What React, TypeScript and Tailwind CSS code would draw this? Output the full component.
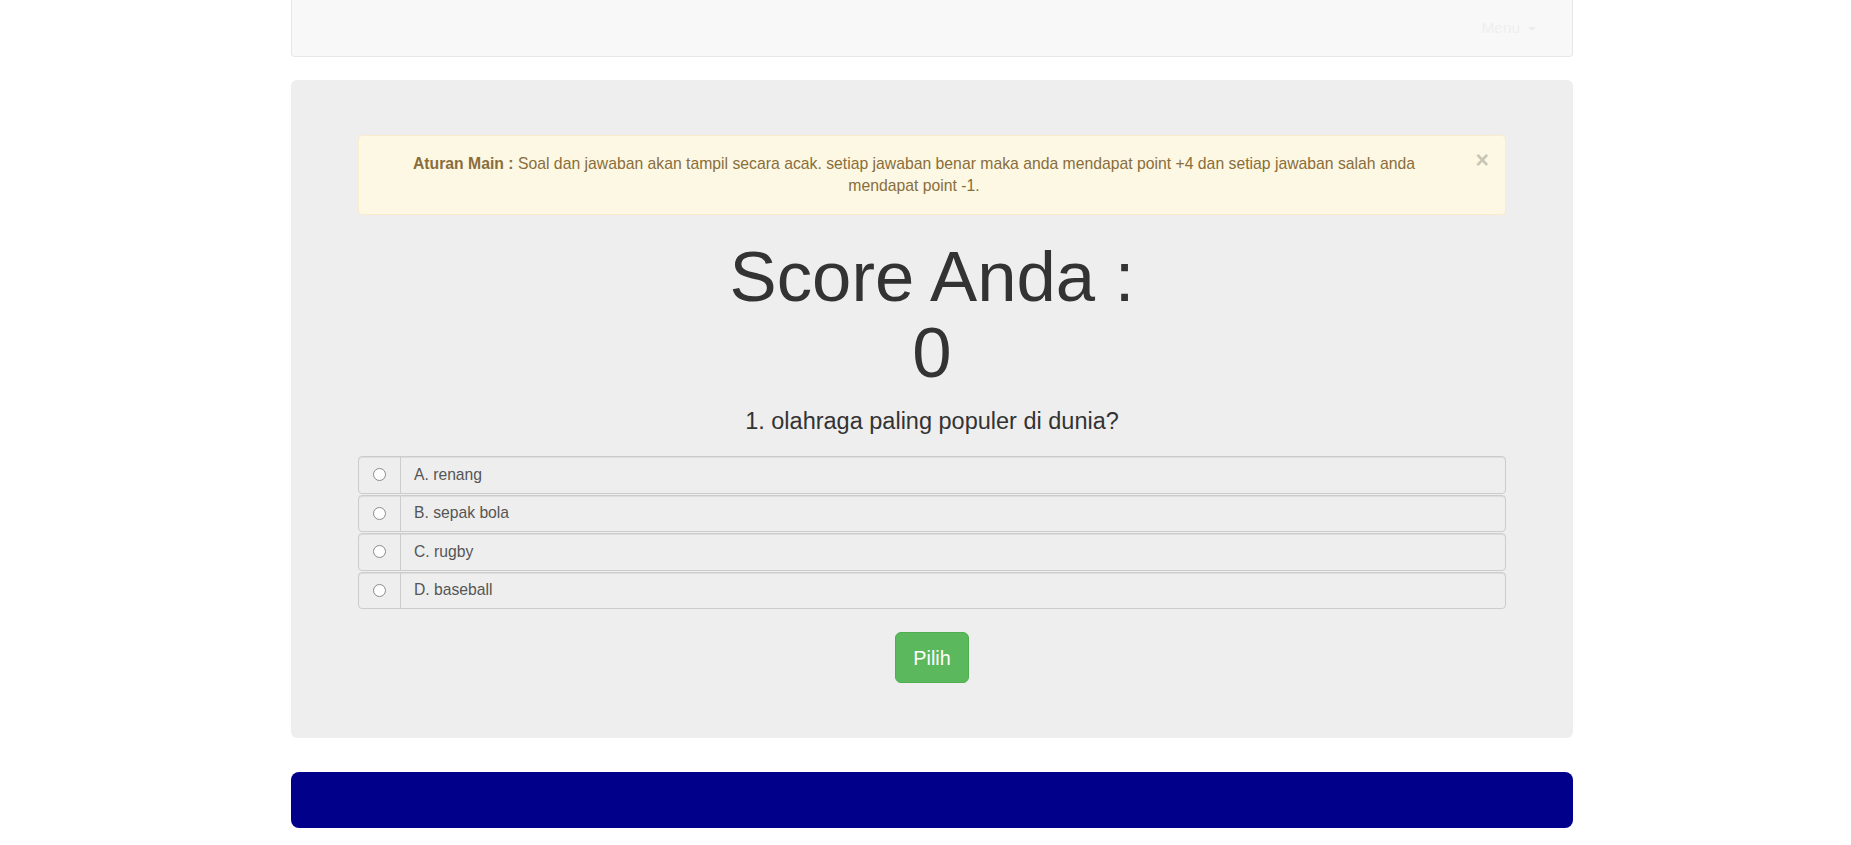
import React from "react";

const options = ["A. renang", "B. sepak bola", "C. rugby", "D. baseball"];

export default function App() {
  return (
    <div className="min-h-screen bg-white font-['Liberation_Sans',Arial,sans-serif] text-[#333]">
      <div className="ml-[291px] w-[1282px]">
        {/* navbar */}
        <div className="h-[57px] bg-[#f8f8f8] border border-t-0 border-[#e7e7e7] rounded-b-[4px] flex items-center justify-end pr-[36px]">
          <span className="text-[15.4px] leading-[22px] text-[#efefef]">Menu</span>
          <span className="ml-[8px] mt-[2px] w-0 h-0 border-l-[4px] border-r-[4px] border-t-[4px] border-l-transparent border-r-transparent border-t-[#ececec]" />
        </div>

        {/* jumbotron */}
        <div className="mt-[23px] bg-[#eeeeee] rounded-[6px] px-[67px] pt-[55px] pb-[55px] flex flex-col">
          {/* alert */}
          <div className="relative h-[80px] bg-[#fcf8e3] border border-[#faebcc] rounded-[4px] pl-[17px] pr-[53px] pt-[17px] text-center text-[#8a6d3b] text-[15.75px] leading-[22px]">
            <span className="font-bold">Aturan Main :</span> Soal dan jawaban akan tampil secara acak. setiap jawaban benar maka anda mendapat point +4 dan setiap jawaban salah anda
            <br />
            mendapat point -1.
            <span className="absolute right-[16px] top-[13px] text-[23px] leading-none font-bold text-black opacity-20">×</span>
          </div>

          {/* score */}
          <h1 className="mt-[24px] text-center text-[70.7px] leading-[76px] font-normal text-[#333]">
            Score Anda :
            <br />0
          </h1>

          {/* question */}
          <p className="mt-[14px] text-center text-[23.5px] leading-[33px] text-[#333]">1. olahraga paling populer di dunia?</p>

          {/* options */}
          <div className="mt-[18px] flex flex-col gap-[1px]">
            {options.map((o) => (
              <div key={o} className="h-[37.5px] flex border border-[#cccccc] rounded-[4px] bg-[#eeeeee] shadow-[inset_0_1px_1px_rgba(0,0,0,0.075)]">
                <div className="w-[42px] shrink-0 border-r border-[#cccccc] flex items-center justify-center">
                  <span className="w-[13px] h-[13px] rounded-full border border-[#8a8a8a] bg-white" />
                </div>
                <div className="flex items-center pl-[13px] text-[15.7px] text-[#555]">{o}</div>
              </div>
            ))}
          </div>

          {/* button */}
          <div className="mt-[23px] flex justify-center">
            <button className="h-[51px] px-[17px] bg-[#5cb85c] border border-[#4cae4c] rounded-[6px] text-white text-[19.8px] leading-[26px]">
              Pilih
            </button>
          </div>
        </div>

        {/* footer */}
        <div className="mt-[34px] h-[56px] bg-[#00008b] rounded-[8px]" />
      </div>
    </div>
  );
}
